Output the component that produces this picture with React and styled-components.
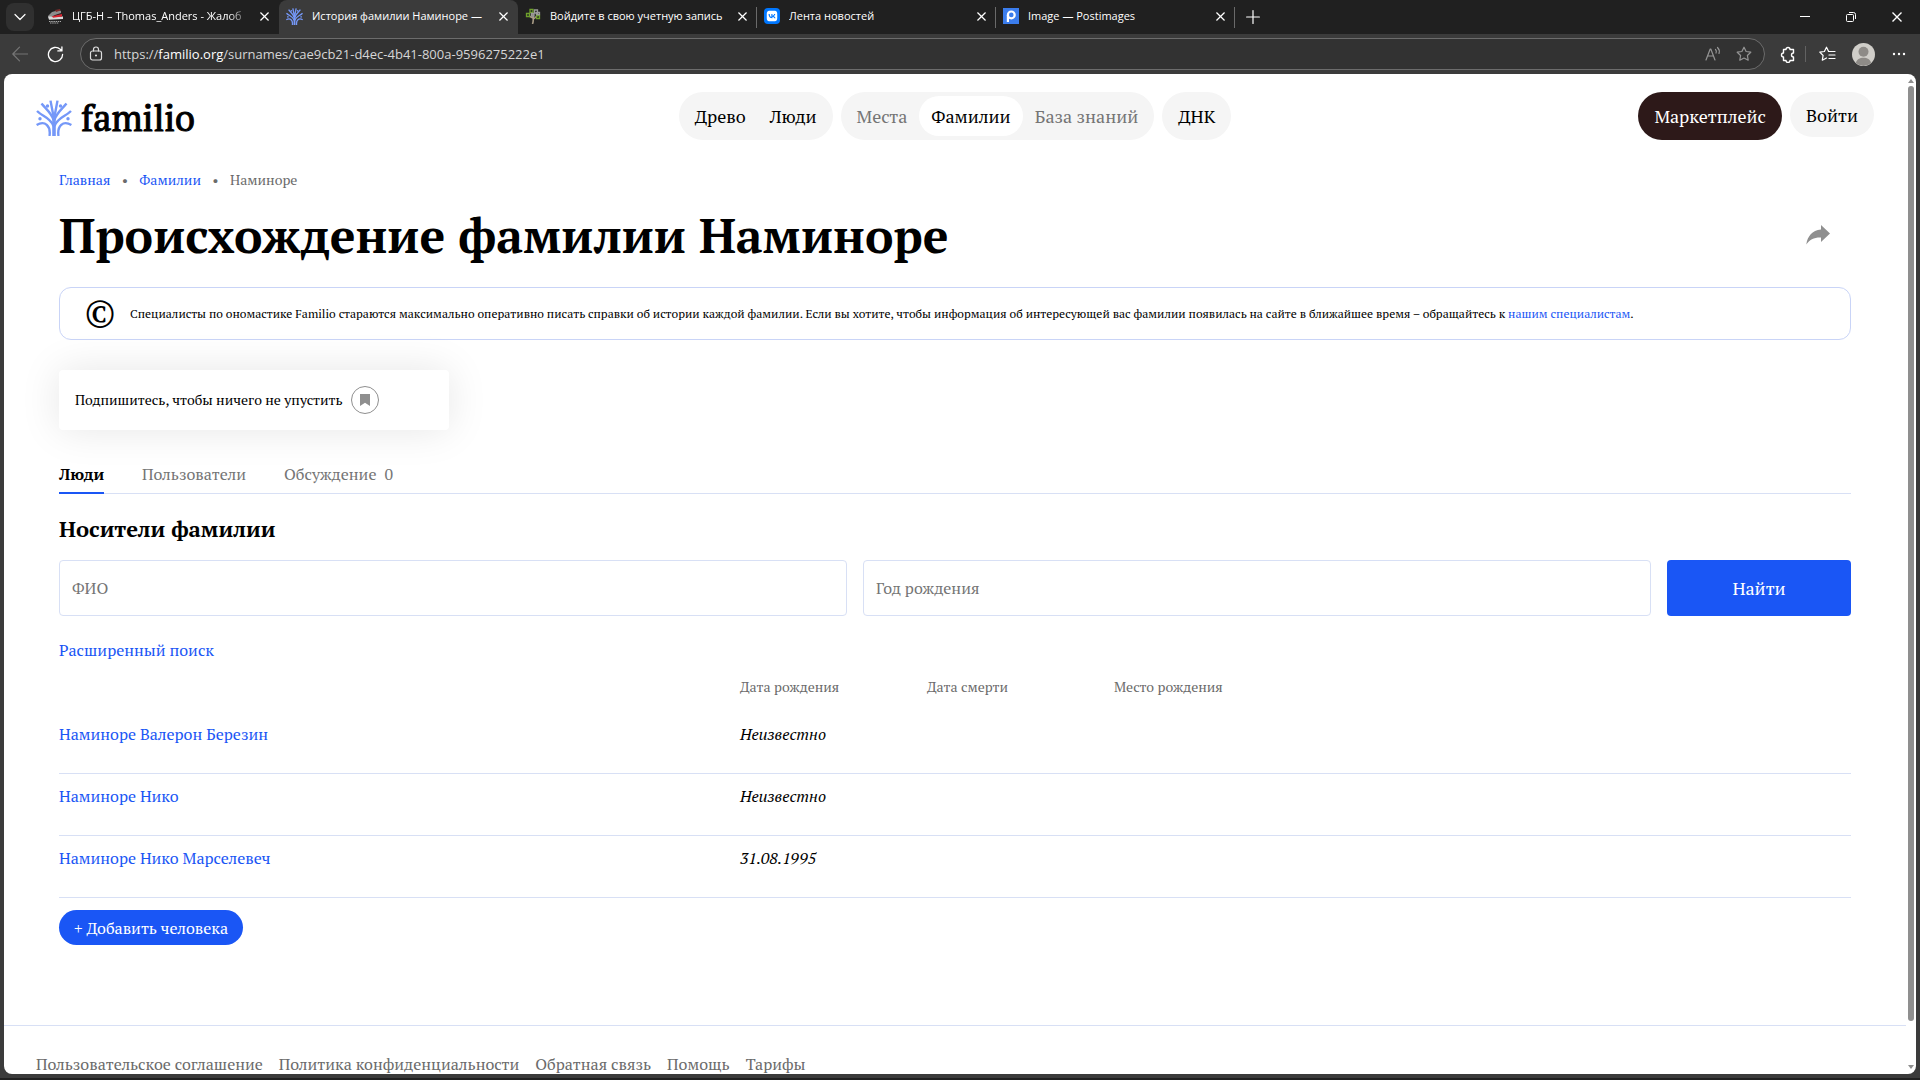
import React from 'react';
import styled, { createGlobalStyle, css } from 'styled-components';
import { FaVk } from 'react-icons/fa6';

const serif = '"PT Serif", "Noto Serif", "Liberation Serif", serif';
const sans = '"Open Sans", "Noto Sans", sans-serif';
const blue = '#1a56f5';
const line = '#d8e0f5';

const Global = createGlobalStyle`
  *, *::before, *::after { box-sizing: border-box; }
  body { margin: 0; background: #3b3b3b; }
  button, input { font: inherit; color: inherit; margin: 0; }
  button { border: 0; padding: 0; background: none; cursor: pointer; }
  a { text-decoration: none; color: ${blue}; }
  svg { display: block; flex: none; }
`;

/* ---------- browser window ---------- */

const Window = styled.div`
  display: flex;
  flex-direction: column;
  height: 100vh;
  overflow: hidden;
  background: #3b3b3b;
  border-bottom: 2px solid #202020;
  font-family: ${sans};
  color: #fff;
`;

const TabStrip = styled.div`
  display: flex;
  align-items: center;
  height: 34px;
  flex: none;
  padding-left: 6px;
  background: #202020;
`;

const TabMenu = styled.button`
  display: grid;
  place-items: center;
  width: 28px;
  height: 28px;
  margin-right: 6px;
  border-radius: 8px;
  background: #303030;
`;

const Tab = styled.div`
  display: flex;
  align-items: center;
  gap: 9px;
  flex: 0 1 239px;
  min-width: 0;
  height: 34px;
  padding: 0 9px 2px 7px;
  border-right: 1px solid transparent;
  border-image: ${p => (p.$divided ? 'linear-gradient(transparent 22%, #6a6a6a 22%, #6a6a6a 80%, transparent 80%) 1' : 'none')};
  font-size: 11px;
  line-height: 16px;
  ${p => p.$active && css`
    background: #3b3b3b;
    border-radius: 8px 8px 0 0;
  `}
`;

const TabTitle = styled.span`
  flex: 1;
  min-width: 0;
  overflow: hidden;
  white-space: nowrap;
  ${p => p.$fade && css`mask-image: linear-gradient(to right, #000 88%, transparent);`}
`;

const IconButton = styled.button`
  display: grid;
  place-items: center;
  flex: none;
  width: ${p => p.$w || 16}px;
  height: ${p => p.$h || 16}px;
`;

const VkBadge = styled.span`
  display: grid;
  place-items: center;
  flex: none;
  width: 16px;
  height: 16px;
  border-radius: 4px;
  background: #0077ff;
  font-size: 12px;
`;

const WindowControls = styled.div`
  display: flex;
  margin-left: auto;
`;

const Toolbar = styled.div`
  display: flex;
  align-items: center;
  height: 40px;
  flex: none;
  padding: 0 8px 0 6px;
`;

const Address = styled.div`
  display: flex;
  align-items: center;
  flex: 1;
  height: 32px;
  margin: 0 12px 0 4px;
  padding: 0 4px 0 7px;
  border: 1px solid #6c6c6c;
  border-radius: 16px;
  background: #323232;
`;

const AddressText = styled.div`
  flex: 1;
  margin-left: 10px;
  font-size: 13px;
  line-height: 20px;
  color: #d6d6d6;
  b { font-weight: 400; color: #fff; }
`;

const ToolDivider = styled.span`
  width: 1px;
  height: 16px;
  margin: 0 8px;
  background: #626262;
`;

const Viewport = styled.div`
  display: flex;
  flex: 1;
  min-height: 0;
  margin: 0 4px 4px;
  border-radius: 8px;
  overflow: hidden;
  background: #fff;
`;

const Page = styled.div`
  flex: 1;
  min-width: 0;
  overflow: hidden;
  font-family: ${serif};
  font-size: 16px;
  line-height: 24px;
  color: #000;
`;

const Scrollbar = styled.div`
  display: flex;
  flex-direction: column;
  align-items: center;
  width: 10px;
  padding: 5px 0;
`;

const Thumb = styled.div`
  flex: 0 1 935px;
  width: 6px;
  margin: 3px 0 auto;
  border-radius: 3px;
  background: #8f8f8f;
`;

/* ---------- site header ---------- */

const SiteHeader = styled.header`
  display: grid;
  grid-template-columns: 1fr auto 1fr;
  align-items: start;
  padding: 18px 32px 0;
  font-size: 18px;
`;

const Logo = styled.a`
  display: flex;
  align-items: center;
  gap: 9px;
  height: 52px;
  color: #000;
  font-size: 36px;
  line-height: 52px;
  -webkit-text-stroke: 1px #000;
`;

const SiteNav = styled.nav`
  display: flex;
  gap: 8px;
`;

const NavGroup = styled.div`
  display: flex;
  align-items: center;
  height: 48px;
  padding: 0 4px;
  border-radius: 24px;
  background: #f5f5f5;
`;

const NavLink = styled.a`
  padding: 0 12px;
  border-radius: 20px;
  line-height: 40px;
  color: ${p => (p.$muted ? '#757575' : '#000')};
  background: ${p => (p.$current ? '#fff' : 'transparent')};
`;

const HeaderActions = styled.div`
  display: flex;
  align-items: flex-start;
  justify-content: flex-end;
  gap: 8px;
`;

const PillButton = styled.button`
  height: ${p => (p.$dark ? 48 : 45)}px;
  padding: 0 16px;
  border-radius: 24px;
  line-height: 24px;
  background: ${p => (p.$dark ? '#2d1919' : '#f5f5f5')};
  color: ${p => (p.$dark ? '#fff' : '#000')};
`;

/* ---------- page content ---------- */

const Main = styled.main`
  padding: 0 55px;
`;

const Crumbs = styled.nav`
  display: flex;
  margin: 26px 0 13px;
  font-size: 14px;
  line-height: 20px;
  color: #6b6b6b;
`;

const Dot = styled.span`
  width: 29px;
  text-align: center;
`;

const TitleRow = styled.div`
  display: flex;
  align-items: center;
  justify-content: space-between;
  padding-right: 21px;
`;

const Title = styled.h1`
  margin: 0;
  font-size: 48px;
  line-height: 64px;
`;

const Notice = styled.div`
  display: flex;
  align-items: center;
  gap: 16px;
  min-height: 53px;
  margin-top: 20px;
  padding: 0 26px;
  border: 1px solid #c9d4f7;
  border-radius: 12px;
  font-size: 12px;
  line-height: 16px;
  p { margin: 0; }
`;

const Copyright = styled.span`
  width: 28px;
  display: flex;
  justify-content: center;
  padding-bottom: 4px;
  font-size: 38px;
  line-height: 36px;
`;

const Subscribe = styled.div`
  display: flex;
  align-items: center;
  gap: 8px;
  width: 390px;
  max-width: 100%;
  height: 60px;
  margin-top: 30px;
  padding: 0 16px;
  border-radius: 4px;
  background: #fff;
  box-shadow: 0 0 40px rgba(0, 0, 0, 0.1);
  font-size: 14px;
`;

const BookmarkButton = styled.button`
  display: grid;
  place-items: center;
  width: 28px;
  height: 28px;
  border: 1px solid #8f8f8f;
  border-radius: 50%;
`;

const Sections = styled.nav`
  display: flex;
  gap: 38px;
  margin-top: 32px;
  box-shadow: inset 0 -1px ${line};
`;

const SectionLink = styled.a`
  padding-bottom: 6px;
  border-bottom: 2px solid ${p => (p.$current ? blue : 'transparent')};
  font-weight: ${p => (p.$current ? 700 : 400)};
  color: ${p => (p.$current ? '#000' : '#757575')};
  span { margin-left: 8px; }
`;

const Heading = styled.h2`
  margin: 19px 0 15px;
  font-size: 22px;
  line-height: 32px;
`;

const SearchForm = styled.form`
  display: grid;
  grid-template-columns: 1fr 1fr 184px;
  gap: 16px;
  margin-bottom: 22px;
`;

const Field = styled.input`
  width: 100%;
  height: 56px;
  padding: 0 12px;
  border: 1px solid ${line};
  border-radius: 4px;
  background: #fff;
  &::placeholder { color: #757575; opacity: 1; }
`;

const Submit = styled.button`
  border-radius: 4px;
  background: ${blue};
  color: #fff;
  font-size: 18px;
`;

const People = styled.table`
  width: 100%;
  table-layout: fixed;
  border-collapse: separate;
  border-spacing: 0;
  text-align: left;
  th {
    height: 50px;
    padding: 0;
    font-size: 14px;
    font-weight: 400;
    color: #6b6b6b;
  }
  th:nth-child(1) { width: 38%; }
  th:nth-child(2), th:nth-child(3) { width: 187px; }
  td {
    height: 62px;
    padding: 10px 0 0;
    vertical-align: top;
    border-bottom: 1px solid ${line};
    font-style: italic;
  }
  td:first-child { font-style: normal; }
`;

const AddButton = styled.button`
  height: 35px;
  margin: 12px 0 80px;
  padding: 0 15px;
  border-radius: 18px;
  background: ${blue};
  color: #fff;
`;

const SiteFooter = styled.footer`
  display: flex;
  gap: 16px;
  padding: 26px 32px;
  border-top: 1px solid ${line};
  white-space: nowrap;
  a { color: #6b6b6b; }
`;

/* ---------- icons ---------- */

const Close = ({ size = 8 }) => (
  <svg width={size} height={size} viewBox="0 0 8 8" stroke="#fff" strokeWidth="1.1"><path d="M.4.4l7.2 7.2M7.6.4.4 7.6" /></svg>
);

const Tree = ({ size, width = 2.4 }) => (
  <svg width={size} height={size} viewBox="0 0 36 36" fill="none" stroke="#7598f8" strokeWidth={width}>
    <path d="M18 36V17" strokeWidth={width + 1.2} />
    <path d="M18 19 14.500.6M18 19 21.500.6" />
    <path d="M17.600 20C15.500 13 10 9 5.500 3.500M18.400 20C20.500 13 26 9 30.500 3.500" />
    <path d="M17.500 26C14 17 7 17 1 11M18.500 26C22 17 29 17 35 11" />
    <path d="M13.500 36C15 26 9 20 .6 25M22.500 36C21 26 27 20 35.400 25" />
    <g fill="#7598f8" stroke="none">
      <circle cx="11.500" cy="6" r="1.700" /><circle cx="24.500" cy="6" r="1.700" />
      <circle cx="4" cy="18.800" r="1.700" /><circle cx="32" cy="18.800" r="1.700" />
    </g>
  </svg>
);

const TrainIcon = () => (
  <svg width="16" height="16" viewBox="0 0 16 16">
    <path d="M1 8 5 4l7-2 2 1v2L8 7 2 10z" fill="#8d8d8d" />
    <path d="M8 2l5-1 .5 1.500L9 4z" fill="#7a2c2c" />
    <path d="M1 8.500h15V11l-14 .8z" fill="#d9d9d9" />
    <path d="M5 8.200 15 6v2.500L6 9.800z" fill="#d8232f" />
    <path d="M2 13.500h12M3 15h9" stroke="#a9a9a9" strokeDasharray="1.500 .7" />
  </svg>
);

const GreenTreeIcon = () => (
  <svg width="16" height="16" viewBox="0 0 16 16" fill="none">
    <path d="M7.500 16C9 12 8 9 8 6M8.500 11 12 8M8 10 4 8" stroke="#a99c86" strokeWidth="1.600" />
    <g stroke="#6ea02c" strokeWidth="1.300"><path d="M5 1.500h3v3H5zM1.500 5.500h3v3h-3zM11.500 7.500h3v3h-3z" /></g>
    <g stroke="#9b9b9b" strokeWidth="1.300"><path d="M9.500 2h3v3h-3zM6.500 5.500h2.500V8H6.500zM11.500 4.500h3v2h-3z" /></g>
  </svg>
);

const PostimagesIcon = () => (
  <svg width="16" height="16" viewBox="0 0 16 16" fill="none">
    <path d="M0 0h16v16H0z" fill="#3b7ded" />
    <circle cx="8.300" cy="6.900" r="3.400" stroke="#fff" strokeWidth="2.200" />
    <path d="M4.900 7v7" stroke="#fff" strokeWidth="2.200" />
  </svg>
);

const glyph = { fill: 'none', stroke: '#fff', strokeWidth: 1.2, strokeLinecap: 'round', strokeLinejoin: 'round' };
const star = 'M8 1.200l2.100 4.300 4.700.7-3.400 3.300.8 4.700L8 12l-4.200 2.200.8-4.700L1.200 6.200l4.700-.7z';

const tabs = [
  { title: 'ЦГБ-Н – Thomas_Anders - Жалоб', icon: <TrainIcon />, fade: true },
  { title: 'История фамилии Наминоре —', icon: <Tree size={17} width={2.8} />, active: true },
  { title: 'Войдите в свою учетную запись', icon: <GreenTreeIcon />, divided: true },
  { title: 'Лента новостей', icon: <VkBadge><FaVk /></VkBadge>, divided: true },
  { title: 'Image — Postimages', icon: <PostimagesIcon />, divided: true },
];

const people = [
  ['Наминоре Валерон Березин', 'Неизвестно'],
  ['Наминоре Нико', 'Неизвестно'],
  ['Наминоре Нико Марселевеч', '31.08.1995'],
];

const footerLinks = ['Пользовательское соглашение', 'Политика конфиденциальности', 'Обратная связь', 'Помощь', 'Тарифы'];

function BrowserBars() {
  return (
    <>
      <TabStrip>
        <TabMenu aria-label="Tabs"><svg width="12" height="8" viewBox="0 0 12 8" {...glyph}><path d="M1 1.500 6 6.500l5-5" /></svg></TabMenu>
        {tabs.map(t => (
          <Tab key={t.title} $active={t.active} $divided={t.divided}>
            {t.icon}
            <TabTitle $fade={t.fade}>{t.title}</TabTitle>
            <IconButton aria-label="Close tab" $w={10}><Close size={9} /></IconButton>
          </Tab>
        ))}
        <IconButton aria-label="New tab" $w={36} $h={30}><svg width="14" height="14" viewBox="0 0 14 14" {...glyph}><path d="M7 .6v12.800M.6 7h12.800" /></svg></IconButton>
        <WindowControls>
          <IconButton aria-label="Minimize" $w={46} $h={34}><svg width="10" height="10" viewBox="0 0 10 10" stroke="#fff"><path d="M0 4.500h10" /></svg></IconButton>
          <IconButton aria-label="Restore" $w={46} $h={34}><svg width="10" height="10" viewBox="0 0 10 10" fill="none" stroke="#fff"><rect x=".5" y="2.500" width="7" height="7" rx="1" /><path d="M3 .5h4.500a2 2 0 0 1 2 2V7" /></svg></IconButton>
          <IconButton aria-label="Close window" $w={46} $h={34}><Close size={10} /></IconButton>
        </WindowControls>
      </TabStrip>
      <Toolbar>
        <IconButton aria-label="Back" $w={28} $h={32}><svg width="16" height="16" viewBox="0 0 16 16" {...glyph} stroke="#757575"><path d="M15.500 8H.8M7.500 1.200.8 8l6.700 6.800" /></svg></IconButton>
        <IconButton aria-label="Reload" $w={42} $h={32}><svg width="17" height="17" viewBox="0 0 18 18" {...glyph} strokeWidth="1.400"><path d="M16.500 9A7.500 7.500 0 1 1 14 3.400L15.800 5M15.800 1v4.200h-4.300" /></svg></IconButton>
        <Address>
          <IconButton aria-label="Site information"><svg width="14" height="16" viewBox="0 0 14 16" {...glyph} stroke="#ddd"><rect x="1.500" y="5" width="11" height="9" rx="2" /><path d="M4.500 5V3.500a2.500 2.500 0 0 1 5 0V5" /><circle cx="7" cy="9.500" r=".5" /></svg></IconButton>
          <AddressText>https://<b>familio.org</b>/surnames/cae9cb21-d4ec-4b41-800a-9596275222e1</AddressText>
          <IconButton aria-label="Read aloud" $w={30}><svg width="16" height="16" viewBox="0 0 16 16" {...glyph} stroke="#959595"><path d="M1 14 5.200 3h.6L10 14M2.500 10h6M10.500 3.500c1 1 1 2.500.5 3.500M12.500 1.500c2 2 2 4.500 1.500 6" /></svg></IconButton>
          <IconButton aria-label="Favorite" $w={32}><svg width="16" height="16" viewBox="0 0 16 16" {...glyph} stroke="#959595"><path d={star} /></svg></IconButton>
        </Address>
        <IconButton aria-label="Extensions" $w={20} $h={32}><svg width="16" height="17" viewBox="0 0 16 17" {...glyph} strokeWidth="1.400"><path d="M4.500 3.500H7a2 2 0 0 1 4 0h3.500V7a2 2 0 1 0 0 4v3.500H11a2 2 0 0 1-4 0H4.500V11a2 2 0 1 1 0-4z" /></svg></IconButton>
        <ToolDivider />
        <IconButton aria-label="Favorites list" $w={26} $h={32}><svg width="17" height="16" viewBox="0 0 17 16" {...glyph}><path d="M9.500 5.300 7.500 1.200 5.400 5.500.8 6.200l3.300 3.300-.8 4.700L7.500 12M9.500 5.500H16M10 9h6M10 12.500h6" /></svg></IconButton>
        <IconButton aria-label="Profile" $w={46} $h={32}>
          <svg width="23" height="23" viewBox="0 0 23 23"><circle cx="11.500" cy="11.500" r="11.500" fill="#d0cec9" /><circle cx="11.500" cy="8.800" r="5" fill="#8e8b87" /><path d="M3.900 20.100C5 13 18 13 19.100 20.100a11.500 11.500 0 0 1-15.200 0z" fill="#8e8b87" /></svg>
        </IconButton>
        <IconButton aria-label="More" $w={26} $h={32}><svg width="14" height="4" viewBox="0 0 14 4" fill="#fff"><circle cx="2" cy="2" r="1.200" /><circle cx="7" cy="2" r="1.200" /><circle cx="12" cy="2" r="1.200" /></svg></IconButton>
      </Toolbar>
    </>
  );
}

export default function App() {
  return (
    <Window>
      <Global />
      <BrowserBars />
      <Viewport>
        <Page>
          <SiteHeader>
            <Logo href="#"><Tree size={36} />familio</Logo>
            <SiteNav>
              <NavGroup><NavLink href="#">Древо</NavLink><NavLink href="#">Люди</NavLink></NavGroup>
              <NavGroup>
                <NavLink href="#" $muted>Места</NavLink>
                <NavLink href="#" $current>Фамилии</NavLink>
                <NavLink href="#" $muted>База знаний</NavLink>
              </NavGroup>
              <NavGroup><NavLink href="#">ДНК</NavLink></NavGroup>
            </SiteNav>
            <HeaderActions>
              <PillButton $dark>Маркетплейс</PillButton>
              <PillButton>Войти</PillButton>
            </HeaderActions>
          </SiteHeader>

          <Main>
            <Crumbs>
              <a href="#">Главная</a><Dot>•</Dot><a href="#">Фамилии</a><Dot>•</Dot><span>Наминоре</span>
            </Crumbs>
            <TitleRow>
              <Title>Происхождение фамилии Наминоре</Title>
              <IconButton aria-label="Поделиться" $w={25} $h={24}>
                <svg width="24" height="20" viewBox="0 0 24 20" fill="#8f8f8f"><path d="M15 0l9 8.500-9 8.500v-4.600C8 12.200 3.500 14.500.3 19.500 1.500 11.500 6 5.500 15 4.600z" /></svg>
              </IconButton>
            </TitleRow>
            <Notice>
              <Copyright>©</Copyright>
              <p>
                Специалисты по ономастике Familio стараются максимально оперативно писать справки об истории каждой фамилии. Если вы хотите, чтобы информация об интересующей вас фамилии появилась на сайте в ближайшее время – обращайтесь к <a href="#">нашим специалистам</a>.
              </p>
            </Notice>
            <Subscribe>
              Подпишитесь, чтобы ничего не упустить
              <BookmarkButton aria-label="Подписаться"><svg width="10" height="12" viewBox="0 0 10 12" fill="#8f8f8f"><path d="M0 0h10v12L5 8.800 0 12z" /></svg></BookmarkButton>
            </Subscribe>
            <Sections>
              <SectionLink href="#" $current>Люди</SectionLink>
              <SectionLink href="#">Пользователи</SectionLink>
              <SectionLink href="#">Обсуждение<span>0</span></SectionLink>
            </Sections>
            <Heading>Носители фамилии</Heading>
            <SearchForm onSubmit={e => e.preventDefault()}>
              <Field aria-label="ФИО" placeholder="ФИО" />
              <Field aria-label="Год рождения" placeholder="Год рождения" />
              <Submit type="submit">Найти</Submit>
            </SearchForm>
            <a href="#">Расширенный поиск</a>
            <People>
              <thead>
                <tr><th /><th>Дата рождения</th><th>Дата смерти</th><th>Место рождения</th></tr>
              </thead>
              <tbody>
                {people.map(([name, born]) => (
                  <tr key={name}><td><a href="#">{name}</a></td><td>{born}</td><td /><td /></tr>
                ))}
              </tbody>
            </People>
            <AddButton>+ Добавить человека</AddButton>
          </Main>
          <SiteFooter>
            {footerLinks.map(t => <a key={t} href="#">{t}</a>)}
          </SiteFooter>
        </Page>
        <Scrollbar>
          <svg width="6" height="4" viewBox="0 0 6 4" fill="#8f8f8f"><path d="M3 0l3 4H0z" /></svg>
          <Thumb />
          <svg width="6" height="4" viewBox="0 0 6 4" fill="#8f8f8f"><path d="M3 4l3-4H0z" /></svg>
        </Scrollbar>
      </Viewport>
    </Window>
  );
}
